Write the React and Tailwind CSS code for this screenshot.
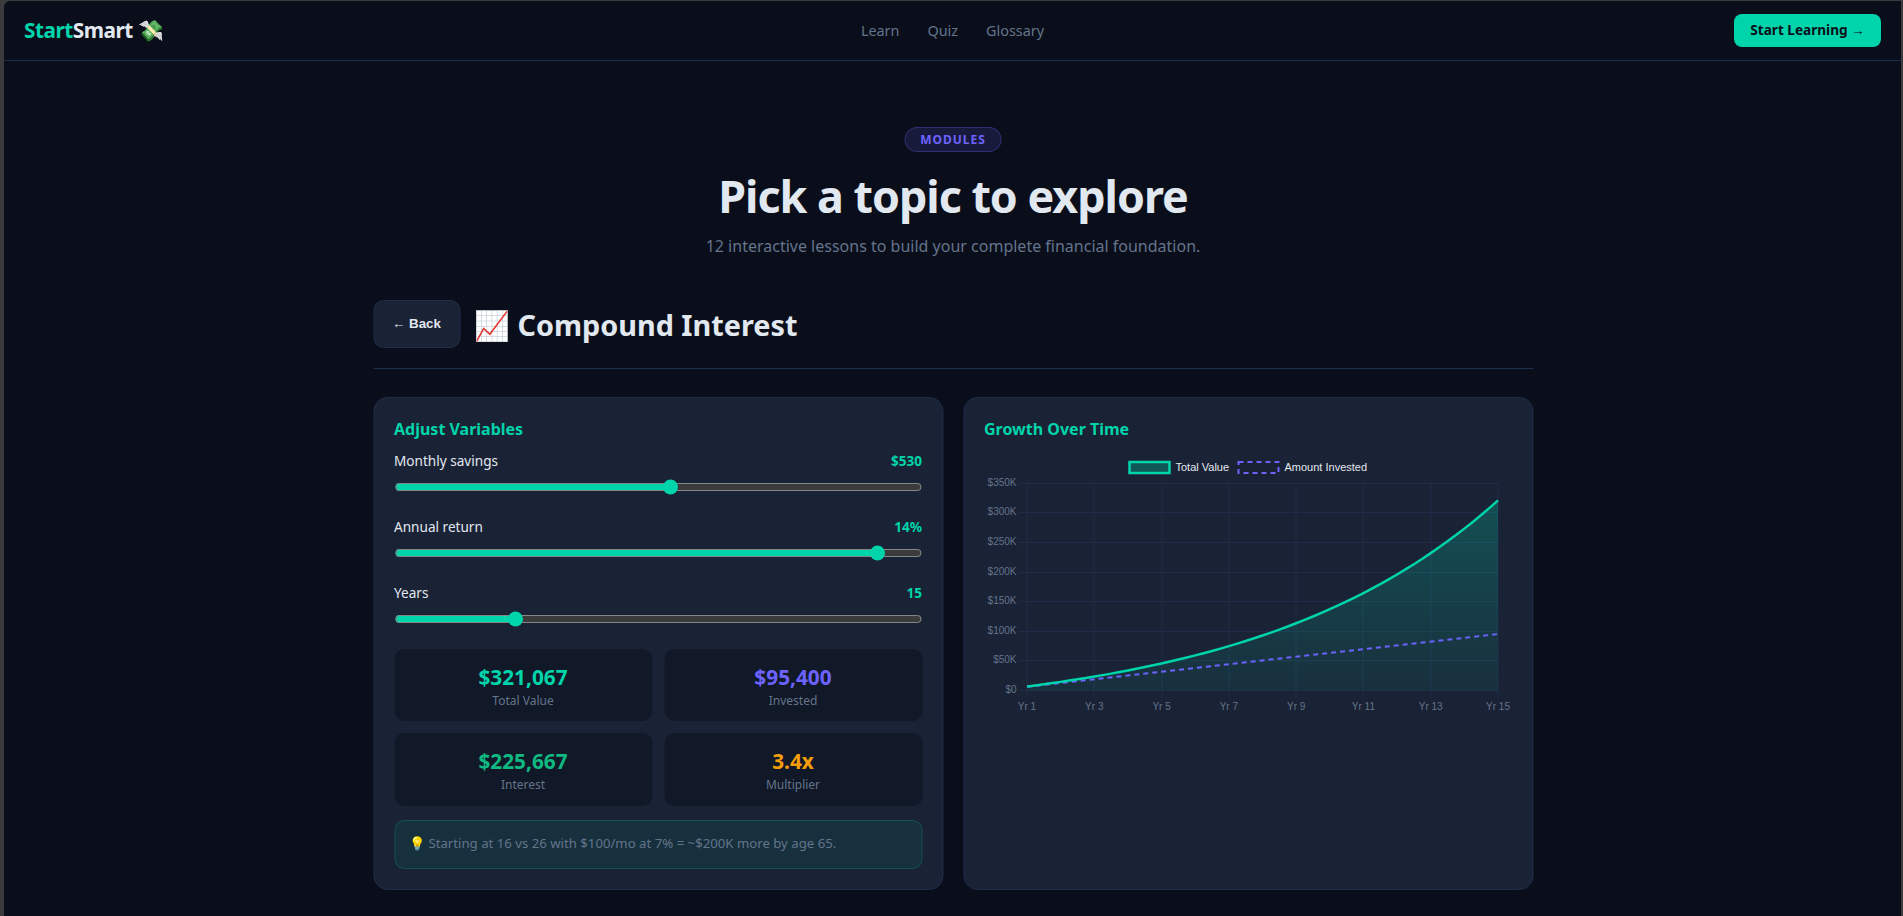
import React from "react";

const MONTHLY = 530;
const RATE = 0.14 / 12;
const YEARS = 15;

const plot = { left: 63.5, right: 534.5, top: 86.3, bottom: 293.5 };
const xAt = (year) => plot.left + ((year - 1) / (YEARS - 1)) * (plot.right - plot.left);
const yAt = (value) => plot.bottom - (value / 350000) * (plot.bottom - plot.top);
const total = (year) => (MONTHLY * (Math.pow(1 + RATE, year * 12) - 1)) / RATE;

const points = [];
for (let y = 1; y <= YEARS + 0.001; y += 0.25) {
  points.push(`${xAt(y).toFixed(2)},${yAt(total(y)).toFixed(2)}`);
}
const curve = "M" + points.join("L");
const area = `${curve}L${plot.right},${plot.bottom}L${plot.left},${plot.bottom}Z`;

const sliders = [
  { label: "Monthly savings", value: "$530", min: 10, max: 1000, now: 530 },
  { label: "Annual return", value: "14%", min: 1, max: 15, now: 14 },
  { label: "Years", value: "15", min: 5, max: 50, now: 15 },
];

const stats = [
  { value: "$321,067", label: "Total Value", color: "text-[#00d4aa]" },
  { value: "$95,400", label: "Invested", color: "text-[#6c63ff]" },
  { value: "$225,667", label: "Interest", color: "text-[#10b981]" },
  { value: "3.4x", label: "Multiplier", color: "text-[#f59e0b]" },
];

function Slider({ label, value, min, max, now }) {
  return (
    <div className="h-[66px]">
      <div className="flex h-[22px] items-center justify-between text-[13.6px]">
        <span>{label}</span>
        <span className="font-bold text-[#00d4aa]">{value}</span>
      </div>
      <input
        type="range"
        min={min}
        max={max}
        defaultValue={now}
        className="mx-0 mt-[7px] block h-4 w-full accent-[#00d4aa] [color-scheme:dark]"
      />
    </div>
  );
}

function Chart() {
  return (
    <svg width="570" height="340" viewBox="0 0 570 340" className="block font-['Liberation_Sans',Arial,sans-serif]">
      <defs>
        <linearGradient id="growth" gradientUnits="userSpaceOnUse" x1="0" y1="54" x2="0" y2="354">
          <stop offset="0" stopColor="#00d4aa" stopOpacity="0.3" />
          <stop offset="1" stopColor="#00d4aa" stopOpacity="0.02" />
        </linearGradient>
      </defs>
      <g stroke="#1e2d4a" strokeWidth="1">
        {[0, 1, 2, 3, 4, 5, 6, 7].map((i) => {
          const y = Math.floor(yAt(i * 50000)) + 0.5;
          return <line key={i} x1="55" x2="534.5" y1={y} y2={y} />;
        })}
        {[1, 3, 5, 7, 9, 11, 13, 15].map((yr) => {
          const x = Math.floor(xAt(yr)) + 0.5;
          return <line key={yr} x1={x} x2={x} y1="86" y2="301" />;
        })}
      </g>
      <path d={area} fill="url(#growth)" />
      <line
        x1={xAt(1)}
        y1={yAt(6360)}
        x2={xAt(15)}
        y2={yAt(95400)}
        stroke="#6c63ff"
        strokeWidth="2"
        strokeDasharray="5 4"
      />
      <path d={curve} fill="none" stroke="#00d4aa" strokeWidth="2.5" />
      <g fill="#64748b" fontSize="10">
        {[0, 1, 2, 3, 4, 5, 6, 7].map((i) => (
          <text key={i} x="53" y={yAt(i * 50000) + 2.5} textAnchor="end">
            {i === 0 ? "$0" : `$${i * 50}K`}
          </text>
        ))}
        {[1, 3, 5, 7, 9, 11, 13, 15].map((yr) => (
          <text key={yr} x={xAt(yr)} y="313" textAnchor="middle">
            Yr {yr}
          </text>
        ))}
      </g>
      <rect x="166" y="65" width="40" height="11" fill="#00d4aa" fillOpacity="0.3" stroke="#00d4aa" strokeWidth="2.5" />
      <rect x="275" y="65" width="40" height="11" fill="none" stroke="#6c63ff" strokeWidth="2" strokeDasharray="5 4" />
      <g fill="#e2e8f0" fontSize="11">
        <text x="212" y="74">Total Value</text>
        <text x="321" y="74">Amount Invested</text>
      </g>
    </svg>
  );
}

export default function App() {
  return (
    <div className="h-[916px] overflow-hidden bg-[#3b3b3d] pl-1 pr-0.5 pt-px font-['Noto_Sans',sans-serif] text-[#e2e8f0]">
      <div className="h-full rounded-tl-md bg-[#0a0e1a]">
        <nav className="grid h-[60px] grid-cols-3 items-center border-b border-[#1e2d4a] pl-5 pr-5">
          <div className="text-[20.8px] font-bold tracking-[-0.5px]">
            <span className="text-[#00d4aa]">Start</span>Smart 💸
          </div>
          <div className="flex justify-center gap-7 text-[14.4px] text-[#64748b]">
            <a>Learn</a>
            <a>Quiz</a>
            <a>Glossary</a>
          </div>
          <button className="h-[33px] w-[147px] justify-self-end rounded-lg bg-[#00d4aa] text-[13.6px] font-bold text-[#0a0e1a]">
            Start Learning →
          </button>
        </nav>

        <main className="mx-auto w-[1160px] translate-x-[0.5px]">
          <header className="flex flex-col items-center pt-[66px]">
            <div className="flex h-[25px] items-center rounded-full border border-[#6c63ff]/30 bg-[#6c63ff]/15 px-[15px] text-xs font-bold tracking-[1px] text-[#6c63ff]">
              MODULES
            </div>
            <h1 className="mt-[17px] text-[44.8px] font-bold leading-[54px] tracking-[-1px]">Pick a topic to explore</h1>
            <p className="mt-[9px] text-base leading-[28px] text-[#64748b]">
              12 interactive lessons to build your complete financial foundation.
            </p>
          </header>

          <div className="mt-10 flex h-[69px] items-start gap-3.5 border-b border-[#1e2d4a]">
            <button className="h-12 w-[87px] rounded-[10px] border border-[#1e2d4a] bg-[#1a2235] font-['Liberation_Sans',Arial,sans-serif] text-[13.33px] font-bold">
              ← Back
            </button>
            <h2 className="text-[28.8px] font-bold leading-[50px]">📈 Compound Interest</h2>
          </div>

          <div className="mt-7 grid h-[493px] grid-cols-2 gap-5">
            <section className="rounded-[14px] border border-[#1e2d4a] bg-[#1a2235] p-5">
              <h3 className="h-[32px] text-base font-bold leading-[22px] text-[#00d4aa]">Adjust Variables</h3>
              {sliders.map((s) => (
                <Slider key={s.label} {...s} />
              ))}
              <div className="mt-[1px] grid grid-cols-2 gap-3">
                {stats.map((s) => (
                  <div key={s.label} className="flex h-[72.4px] flex-col items-center rounded-[10px] bg-[#111827] pt-[14px]">
                    <div className={`text-[20.8px] font-bold leading-[28px] ${s.color}`}>{s.value}</div>
                    <div className="mt-0.5 text-[12px] leading-[16px] text-[#64748b]">{s.label}</div>
                  </div>
                ))}
              </div>
              <div className="mt-[14px] h-[49px] rounded-[10px] border border-[#00d4aa]/20 bg-[#00d4aa]/8 px-[14px] text-[13.2px] leading-[45px] text-[#64748b]">
                💡 Starting at 16 vs 26 with $100/mo at 7% = ~$200K more by age 65.
              </div>
            </section>
            <section className="relative rounded-[14px] border border-[#1e2d4a] bg-[#1a2235]">
              <h3 className="absolute left-5 top-5 text-base font-bold leading-[22px] text-[#00d4aa]">Growth Over Time</h3>
              <div className="-ml-px -mt-px">
                <Chart />
              </div>
            </section>
          </div>
        </main>
      </div>
    </div>
  );
}
